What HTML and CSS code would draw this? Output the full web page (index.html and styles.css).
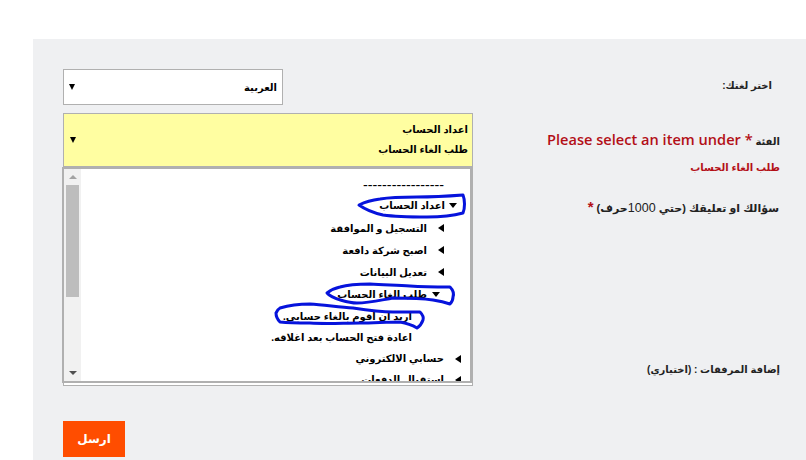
FILE: index.html
```html
<!DOCTYPE html>
<html lang="ar">
<head>
<meta charset="utf-8">
<title>Form</title>
<link rel="stylesheet" href="styles.css">
</head>
<body>
<main class="panel">
  <form class="form">
    <div class="controls">
      <div class="select lang"><span class="val">العربية</span><span class="caret"></span></div>
      <div class="select cat">
        <div class="val-lines"><div>اعداد الحساب</div><div>طلب الغاء الحساب</div></div>
        <span class="caret"></span>
      </div>
      <div class="tree-wrap">
        <div class="tree">
          <div class="tree-body">
            <div class="dash">-----------------</div>
            <div class="item l1"><span class="tri down"></span>اعداد الحساب</div>
            <div class="item l2"><span class="tri left"></span>التسجيل و الموافقة</div>
            <div class="item l2"><span class="tri left"></span>اصبح شركة دافعة</div>
            <div class="item l2"><span class="tri left"></span>تعديل البيانات</div>
            <div class="item l3"><span class="tri down"></span>طلب الغاء الحساب</div>
            <div class="item l4">اريد ان اقوم بالغاء حسابي.</div>
            <div class="item l4">اعادة فتح الحساب بعد اغلاقه.</div>
            <div class="item l1b"><span class="tri left"></span>حسابي الالكتروني</div>
            <div class="item l1b"><span class="tri left"></span>استقبال الدفعات</div>
          </div>
          <div class="scrollbar">
            <span class="arrow up"></span>
            <span class="thumb"></span>
            <span class="arrow dn"></span>
          </div>
          <svg class="marks" width="410" height="216" viewBox="0 0 410 216" fill="none" stroke="#0613dc" stroke-width="3" stroke-linecap="round" stroke-linejoin="round">
            <path d="M297 38C303 35 310 33 318 32C330 30 342 30 355 30C372 30 388 29 401 28C403 33 403 41 401 46C390 49 378 50 365 50C350 50 335 50 321 48C312 46 304 43 297 38Z"/>
            <path d="M265 126C269 123 273 121 278 120C288 117 298 117 308 117C322 118 335 118 348 119C362 120 376 120 388 120C391 123 392 127 391 130C391 133 390 135 388 137C382 135 377 134 371 133C358 131 344 131 331 131C319 133 307 136 295 136C288 136 270 132 265 126Z"/>
            <path d="M214 146C215 144 216 142 218 141C228 138 238 137 248 137C262 138 277 140 291 141C304 143 318 145 331 145C340 145 349 145 358 145C361 148 362 150 361 153C360 156 358 159 355 161C350 158 344 156 338 155C325 155 311 156 298 156C281 156 265 157 248 156C238 156 228 156 218 155C215 152 214 149 214 146Z"/>
          </svg>
        </div>
      </div>
      <button class="send" type="button">ارسل</button>
    </div>
    <div class="labels">
      <div class="lab l-lang">اختر لغتك:</div>
      <div class="lab l-cat">الفئة <span class="err latin">* Please select an item under</span></div>
      <div class="lab err l-sel">طلب الغاء الحساب</div>
      <div class="lab l-q">سؤالك او تعليقك (حتي <span class="num">1000</span>حرف) <span class="err star">*</span></div>
      <div class="lab l-att">إضافة المرفقات : (اختياري)</div>
    </div>
  </form>
</main>
</body>
</html>
```
FILE: styles.css
```css
* { box-sizing: border-box; }
html, body { margin: 0; height: 460px; overflow: hidden; background: #fff; }
body { padding: 39px 0 0 33px; font-family: "Liberation Sans", "DejaVu Sans", sans-serif; font-size: 10px; color: #000; }
.panel { height: 421px; background: #eff0f2; padding: 30px 26px 0 30px; overflow: hidden; }
.form { display: flex; justify-content: space-between; }
.controls { width: 410px; display: flex; flex-direction: column; }
.select { border: 1px solid #b0b0b0; display: flex; align-items: center; justify-content: space-between; direction: rtl; font-weight: 700; }
.lang { width: 220px; height: 36px; background: #fff; padding: 0 5px; margin-bottom: 8px; }
.cat { height: 54px; background: #fffea1; padding: 0 4px 0 6px; }
.caret { width: 0; height: 0; border-left: 3.5px solid transparent; border-right: 3.5px solid transparent; border-top: 6px solid #000; }
.val-lines div { line-height: 20px; }
.tree-wrap { height: 219px; background: #fff; border: 1px solid #b0b0b0; border-top: 0; }
.tree { position: relative; width: 410px; height: 216px; margin-left: -2px; display: flex; flex-direction: row-reverse; border: 2px solid #b0b0b0; background: #fff; }
.tree-body { flex: 1; direction: rtl; overflow: hidden; font-weight: 700; padding-top: 5px; min-width: 0; }
.dash { padding-right: 26px; height: 20px; font-size: 14.3px; font-weight: 400; line-height: 22px; }
.item { display: flex; align-items: center; white-space: nowrap; }
.l1 { padding-right: 13px; height: 23px; }
.l1 .tri { margin-left: 4px; }
.l2 { padding-right: 26px; height: 22px; }
.l2 .tri { margin-left: 11px; }
.l3 { padding-right: 30px; height: 23px; }
.l3 .tri { margin-left: 5px; }
.l4 { padding-right: 58px; height: 21px; }
.l1b { padding-right: 9px; height: 21px; }
.l1b .tri { margin-left: 11px; }
.tri { display: inline-block; width: 0; height: 0; flex: none; }
.tri.down { border-left: 4.5px solid transparent; border-right: 4.5px solid transparent; border-top: 5px solid #000; }
.tri.left { border-top: 4.5px solid transparent; border-bottom: 4.5px solid transparent; border-right: 6px solid #000; }
.scrollbar { width: 17px; flex: none; background: #f1f1f1; display: flex; flex-direction: column; align-items: center; }
.arrow { width: 0; height: 0; border-left: 4px solid transparent; border-right: 4px solid transparent; }
.arrow.up { border-bottom: 4px solid #a3a3a3; margin-top: 6px; }
.arrow.dn { border-top: 4px solid #505050; margin-top: auto; margin-bottom: 6px; }
.thumb { width: 13px; height: 112px; background: #bdbdbd; margin-top: 6px; }
.marks { position: absolute; left: -2px; top: -2px; }
.send { width: 62px; height: 36px; margin-top: 35px; border: 0; background: #ff4d00; color: #fff; font: 700 12px "Liberation Sans", "DejaVu Sans", sans-serif; }
.labels { direction: rtl; flex: 0 0 auto; width: 255px; font-weight: 700; color: #222; }
.lab { white-space: nowrap; }
.err { color: #b30f17; }
.latin { font: 600 14.6px "Open Sans", sans-serif; }
.star { font-size: 15px; }
.num { font-weight: 400; font-size: 12.5px; }
.l-lang { margin-top: 9px; padding-right: 8px; line-height: 16px; }
.l-cat { margin-top: 35px; line-height: 20px; }
.l-sel { margin-top: 6px; line-height: 20px; }
.l-q { margin-top: 19px; line-height: 20px; font-size: 11px; padding-right: 1px; }
.l-att { margin-top: 142px; line-height: 20px; }
```
